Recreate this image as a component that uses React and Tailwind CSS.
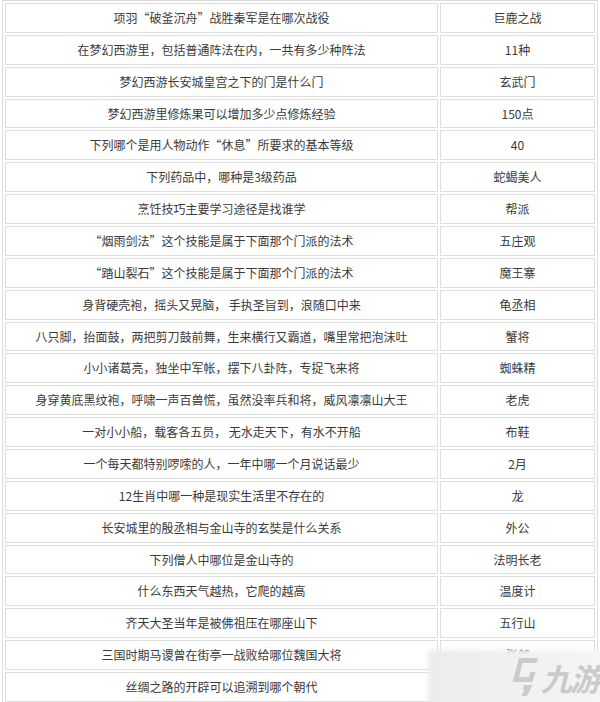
import React from 'react';

const rows = [
  ['项羽“破釜沉舟”战胜秦军是在哪次战役', '巨鹿之战'],
  ['在梦幻西游里，包括普通阵法在内，一共有多少种阵法', '11种'],
  ['梦幻西游长安城皇宫之下的门是什么门', '玄武门'],
  ['梦幻西游里修炼果可以增加多少点修炼经验', '150点'],
  ['下列哪个是用人物动作“休息”所要求的基本等级', '40'],
  ['下列药品中，哪种是3级药品', '蛇蝎美人'],
  ['烹饪技巧主要学习途径是找谁学', '帮派'],
  ['“烟雨剑法”这个技能是属于下面那个门派的法术', '五庄观'],
  ['“踏山裂石”这个技能是属于下面那个门派的法术', '魔王寨'],
  ['身背硬壳袍，摇头又晃脑， 手执圣旨到，浪随口中来', '龟丞相'],
  ['八只脚，抬面鼓，两把剪刀鼓前舞，生来横行又霸道，嘴里常把泡沫吐', '蟹将'],
  ['小小诸葛亮，独坐中军帐，摆下八卦阵，专捉飞来将', '蜘蛛精'],
  ['身穿黄底黑纹袍，呼啸一声百兽慌，虽然没率兵和将，威风凛凛山大王', '老虎'],
  ['一对小小船，载客各五员， 无水走天下，有水不开船', '布鞋'],
  ['一个每天都特别啰嗦的人，一年中哪一个月说话最少', '2月'],
  ['12生肖中哪一种是现实生活里不存在的', '龙'],
  ['长安城里的殷丞相与金山寺的玄奘是什么关系', '外公'],
  ['下列僧人中哪位是金山寺的', '法明长老'],
  ['什么东西天气越热，它爬的越高', '温度计'],
  ['齐天大圣当年是被佛祖压在哪座山下', '五行山'],
  ['三国时期马谡曾在街亭一战败给哪位魏国大将', '张郃'],
  ['丝绸之路的开辟可以追溯到哪个朝代', ''],
];

const Logo = () => (
  <svg width="28" height="40" viewBox="0 0 28 40" fill="#cbcbcb">
    <path d="M9 1 L28 1 L26.5 6 L12.5 6 L9 20 L19 20 L20.5 15 L25.5 15 L22.5 25 L2.5 25 Z" />
    <path d="M14 28 L22.5 28 L17 39 L11.5 39 L14.5 32.5 L12.5 32.5 Z" />
  </svg>
);

export default function App() {
  return (
    <div
      lang="zh-CN"
      className="relative w-[600px] h-[702px] overflow-hidden bg-white"
      style={{ fontFamily: '"Noto Sans CJK SC", "Noto Sans", sans-serif' }}
    >
      <table className="ml-[2px] w-[596px] border border-[#dcdcdc] border-separate border-spacing-[2px] table-fixed">
        <colgroup>
          <col className="w-[433px]" />
          <col className="w-[155px]" />
        </colgroup>
        <tbody>
          {rows.map(([q, a], i) => (
            <tr key={i}>
              <td className="h-[29.86px] p-0 border border-[#dedede] text-center text-[12px] leading-none text-[#3a3a3a] whitespace-nowrap">
                {q}
              </td>
              <td className="h-[29.86px] p-0 border border-[#dedede] text-center text-[12px] leading-none text-[#3a3a3a] whitespace-nowrap">
                {a}
              </td>
            </tr>
          ))}
        </tbody>
      </table>

      {/* watermark */}
      <div className="absolute left-[428px] top-[650px] w-[190px] h-[70px] bg-gradient-to-r from-[#ececec] to-[#f6f6f6] blur-[2px]" />
      <div className="absolute left-[510px] top-[657px] flex items-center gap-[3px]">
        <Logo />
        <span className="text-[31px] font-bold italic text-[#cacaca] leading-none tracking-[-2px] whitespace-nowrap">九游</span>
      </div>
    </div>
  );
}
